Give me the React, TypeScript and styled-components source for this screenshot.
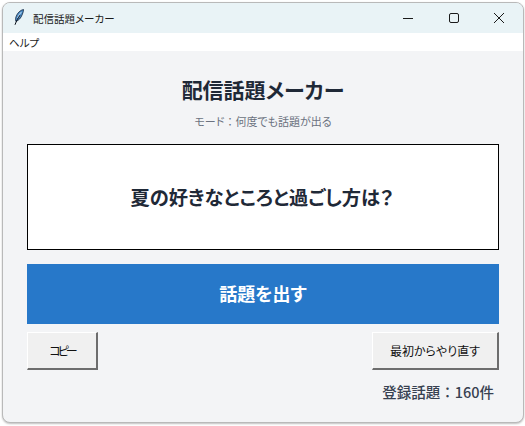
import React from 'react';
import styled, { createGlobalStyle } from 'styled-components';

const GlobalStyle = createGlobalStyle`
  html, body {
    margin: 0;
    padding: 0;
    background: #ffffff;
  }
  body {
    font-family: "Noto Sans CJK JP", "Liberation Sans", sans-serif;
    font-feature-settings: "palt";
  }
`;

function FeatherIcon() {
  return (
    <svg width="12" height="18" viewBox="0 0 12 18">
      <path d="M11.5 0.5C8.5 1 5.2 4 4 7.8 3.4 9.8 3.4 11.2 3.8 12.2 6.6 11.8 9 9 10.4 5.2 11.1 3.4 11.6 1.8 11.5 0.5Z" fill="#4f8fc9" stroke="#12263f" strokeWidth="0.8" />
      <path d="M9.4 3C7.8 4.6 6.4 6.6 5.6 9" stroke="#cfe4f5" strokeWidth="0.9" fill="none" />
      <path d="M8 6.2C6 9 4.4 12 3 15.8" stroke="#0b0f18" strokeWidth="1" fill="none" />
    </svg>
  );
}

export default function App() {
  return (
    <>
      <GlobalStyle />
      <Page>
        <Window>
          <TitleBar>
            <TitleLeft>
              <FeatherIcon />
              <TitleText>配信話題メーカー</TitleText>
            </TitleLeft>
            <WindowControls>
              <ControlButton>
                <svg width="12" height="12" viewBox="0 0 12 12">
                  <path d="M1 6.5H11" stroke="#1a1a1a" strokeWidth="1" />
                </svg>
              </ControlButton>
              <ControlButton>
                <svg width="12" height="12" viewBox="0 0 12 12">
                  <rect x="1.5" y="1.5" width="9" height="9" rx="1.5" fill="none" stroke="#1a1a1a" strokeWidth="1" />
                </svg>
              </ControlButton>
              <ControlButton>
                <svg width="12" height="12" viewBox="0 0 12 12">
                  <path d="M1 1L11 11M11 1L1 11" stroke="#1a1a1a" strokeWidth="1" />
                </svg>
              </ControlButton>
            </WindowControls>
          </TitleBar>
          <MenuBar>
            <MenuItem>ヘルプ</MenuItem>
          </MenuBar>
          <Content>
            <Heading>配信話題メーカー</Heading>
            <ModeText>モード<FullColon>：</FullColon>何度でも話題が出る</ModeText>
            <TopicBox>夏の好きなところと過ごし方は？</TopicBox>
            <PrimaryButton>話題を出す</PrimaryButton>
            <ActionRow>
              <SystemButton $width={71} $tracking={-3}>コピー</SystemButton>
              <SystemButton $width={127}>最初からやり直す</SystemButton>
            </ActionRow>
            <CountText>登録話題<FullColon>：</FullColon>160件</CountText>
          </Content>
        </Window>
      </Page>
    </>
  );
}

const Page = styled.div`
  width: 525px;
  height: 426px;
  padding: 2px 1px 3px 2px;
  box-sizing: border-box;
  overflow: hidden;
`;

const Window = styled.div`
  height: 100%;
  box-sizing: border-box;
  display: flex;
  flex-direction: column;
  border: 1px solid #b9b9b9;
  border-radius: 8px;
  overflow: hidden;
  background: #f3f4f6;
  box-shadow: 0 1px 2px rgba(0, 0, 0, 0.25);
`;

const TitleBar = styled.div`
  height: 30px;
  flex: none;
  display: flex;
  align-items: center;
  justify-content: space-between;
  background: #e9f3f6;
`;

const TitleLeft = styled.div`
  display: flex;
  align-items: center;
  gap: 9px;
  padding-left: 9px;
`;

const TitleText = styled.span`
  font-size: 10.5px;
  color: #1a1a1a;
`;

const WindowControls = styled.div`
  display: flex;
  padding-right: 1px;
`;

const ControlButton = styled.div`
  width: 45.5px;
  height: 30px;
  display: flex;
  align-items: center;
  justify-content: center;
`;

const MenuBar = styled.div`
  height: 18px;
  flex: none;
  display: flex;
  align-items: center;
  padding-left: 6px;
  background: #ffffff;
`;

const MenuItem = styled.span`
  font-size: 10.5px;
  color: #1a1a1a;
`;

const Content = styled.div`
  flex: 1;
  display: flex;
  flex-direction: column;
  padding: 0 24px;
`;

const Heading = styled.h1`
  margin: 22px 0 0;
  height: 32px;
  line-height: 32px;
  font-size: 21px;
  font-weight: 700;
  text-align: center;
  color: #1f2937;
`;

const ModeText = styled.div`
  margin-top: 8px;
  height: 16px;
  line-height: 16px;
  font-size: 11px;
  text-align: center;
  color: #6b7280;
`;

const FullColon = styled.span`
  font-feature-settings: normal;
`;

const TopicBox = styled.div`
  margin-top: 15px;
  height: 106px;
  box-sizing: border-box;
  padding-right: 2px;
  display: flex;
  align-items: center;
  justify-content: center;
  border: 1px solid #000000;
  background: #ffffff;
  font-size: 19.25px;
  font-weight: 700;
  color: #1f2937;
`;

const PrimaryButton = styled.div`
  margin-top: 14px;
  height: 60px;
  box-sizing: border-box;
  padding-bottom: 3px;
  display: flex;
  align-items: center;
  justify-content: center;
  background: #2778c9;
  color: #ffffff;
  font-size: 18px;
  font-weight: 700;
`;

const ActionRow = styled.div`
  margin-top: 8px;
  display: flex;
  justify-content: space-between;
`;

const SystemButton = styled.div<{ $width: number; $tracking?: number }>`
  width: ${(p) => p.$width}px;
  height: 38px;
  box-sizing: border-box;
  display: flex;
  align-items: center;
  justify-content: center;
  background: #f0f0f0;
  border-top: 1px solid #ffffff;
  border-left: 1px solid #ffffff;
  border-right: 2px solid #6d6d6d;
  border-bottom: 2px solid #6d6d6d;
  font-size: 12px;
  letter-spacing: ${(p) => p.$tracking ?? 0}px;
  color: #111111;
`;

const CountText = styled.div`
  margin-top: 12px;
  padding-right: 5px;
  height: 20px;
  line-height: 20px;
  text-align: right;
  font-size: 14.5px;
  font-weight: 500;
  color: #374151;
`;
